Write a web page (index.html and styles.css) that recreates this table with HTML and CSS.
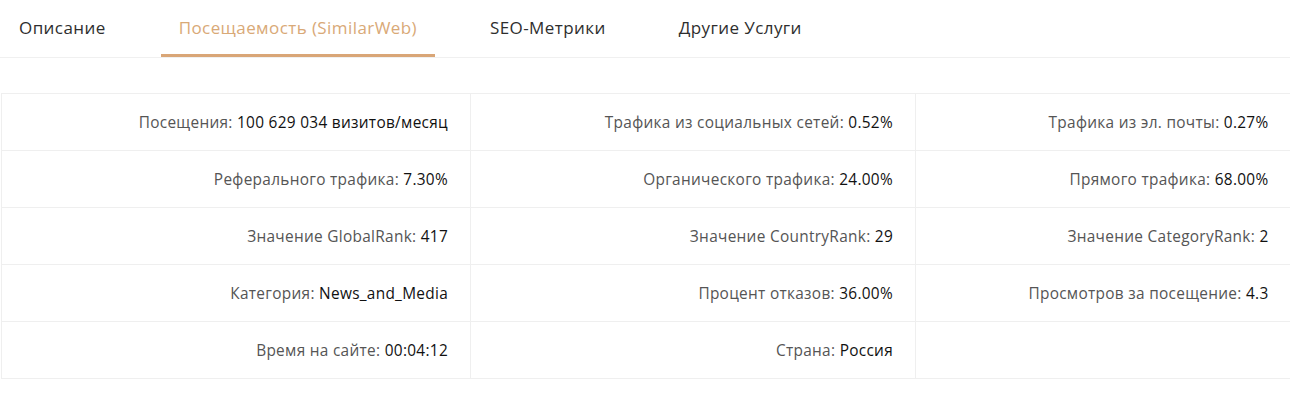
FILE: index.html
```html
<!DOCTYPE html>
<html lang="ru">
<head>
<meta charset="utf-8">
<link rel="stylesheet" href="styles.css">
</head>
<body>
<div class="page">
  <nav class="tabs">
    <a class="tab">Описание</a>
    <a class="tab active">Посещаемость (SimilarWeb)</a>
    <a class="tab">SEO-Метрики</a>
    <a class="tab">Другие Услуги</a>
  </nav>
  <table class="stats">
    <colgroup>
      <col class="c1"><col class="c2"><col class="c3">
    </colgroup>
    <tr>
      <td><span class="lbl">Посещения:</span> <span class="val">100 629 034 визитов/месяц</span></td>
      <td><span class="lbl">Трафика из социальных сетей:</span> <span class="val">0.52%</span></td>
      <td><span class="lbl">Трафика из эл. почты:</span> <span class="val">0.27%</span></td>
    </tr>
    <tr>
      <td><span class="lbl">Реферального трафика:</span> <span class="val">7.30%</span></td>
      <td><span class="lbl">Органического трафика:</span> <span class="val">24.00%</span></td>
      <td><span class="lbl">Прямого трафика:</span> <span class="val">68.00%</span></td>
    </tr>
    <tr>
      <td><span class="lbl">Значение GlobalRank:</span> <span class="val">417</span></td>
      <td><span class="lbl">Значение CountryRank:</span> <span class="val">29</span></td>
      <td><span class="lbl">Значение CategoryRank:</span> <span class="val">2</span></td>
    </tr>
    <tr>
      <td><span class="lbl">Категория:</span> <span class="val">News_and_Media</span></td>
      <td><span class="lbl">Процент отказов:</span> <span class="val">36.00%</span></td>
      <td><span class="lbl">Просмотров за посещение:</span> <span class="val">4.3</span></td>
    </tr>
    <tr>
      <td><span class="lbl">Время на сайте:</span> <span class="val">00:04:12</span></td>
      <td><span class="lbl">Страна:</span> <span class="val">Россия</span></td>
      <td></td>
    </tr>
  </table>
</div>
</body>
</html>
```

FILE: styles.css
```css
* { box-sizing: border-box; }
html, body { margin: 0; padding: 0; background: #fff; }
body {
  font-family: "Open Sans", "Noto Sans", "Liberation Sans", sans-serif;
  color: #222;
}
.page { padding-left: 1px; }
.tabs {
  display: flex;
  gap: 37px;
  border-bottom: 1px solid #f0f0f0;
  margin-left: -1px;
  padding-left: 1px;
}
.tab {
  display: block;
  padding: 0 18px;
  height: 57px;
  line-height: 56px;
  font-size: 17px;
  letter-spacing: 0.42px;
  color: #2e2e2e;
  border-bottom: 3px solid transparent;
  cursor: pointer;
}
.tab.active {
  color: #d9a977;
  border-bottom-color: #d9a677;
}
.stats {
  margin-top: 35px;
  width: 1289px;
  border-collapse: collapse;
  table-layout: fixed;
  font-size: 15.4px;
  letter-spacing: 0.3px;
}
.c1 { width: 469px; }
.c2 { width: 445px; }
.c3 { width: 375px; }
.stats td {
  height: 57px;
  padding: 0 22px;
  text-align: right;
  border: 1px solid #efefef;
  border-right: none;
}
.lbl { color: #555; }
.val { color: #111; }
```
